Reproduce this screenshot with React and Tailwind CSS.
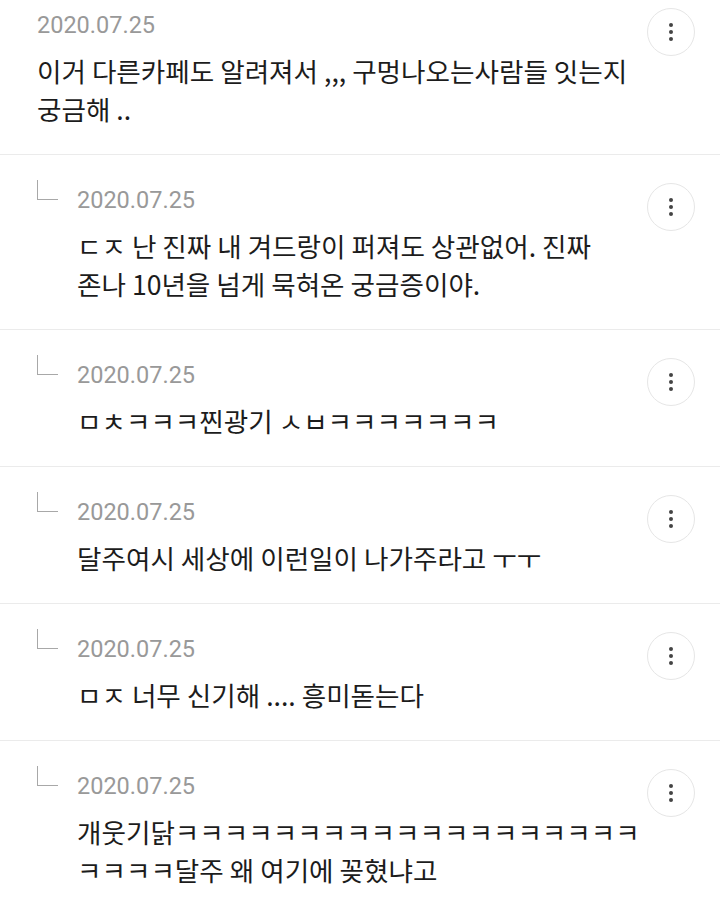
import React from "react";

const comments = [
  { reply: false, first: true, lines: ["이거 다른카페도 알려져서 ,,, 구멍나오는사람들 잇는지", "궁금해 .."] },
  { reply: true, lines: ["ㄷㅈ 난 진짜 내 겨드랑이 퍼져도 상관없어. 진짜", "존나 10년을 넘게 묵혀온 궁금증이야."] },
  { reply: true, lines: ["ㅁㅊㅋㅋㅋ찐광기 ㅅㅂㅋㅋㅋㅋㅋㅋㅋ"] },
  { reply: true, lines: ["달주여시 세상에 이런일이 나가주라고 ㅜㅜ"] },
  { reply: true, lines: ["ㅁㅈ 너무 신기해 .... 흥미돋는다"] },
  { reply: true, lines: ["개웃기닭ㅋㅋㅋㅋㅋㅋㅋㅋㅋㅋㅋㅋㅋㅋㅋㅋㅋㅋㅋ", "ㅋㅋㅋㅋ달주 왜 여기에 꽂혔냐고"] },
];

function Kebab() {
  return (
    <div className="w-[48px] h-[48px] rounded-full border border-[#e6e6e6] flex flex-col items-center justify-center gap-[3px] shrink-0">
      <span className="w-[4px] h-[4px] rounded-full bg-[#444]" />
      <span className="w-[4px] h-[4px] rounded-full bg-[#444]" />
      <span className="w-[4px] h-[4px] rounded-full bg-[#444]" />
    </div>
  );
}

function ReplyMark() {
  return (
    <div className="w-[40px] shrink-0 pt-[25px]">
      <div className="w-[21px] h-[20px] border-l-[1.5px] border-b-[1.5px] border-[#a8a8a8]" />
    </div>
  );
}

export default function App() {
  return (
    <div className="w-[720px] h-[903px] overflow-hidden bg-white" style={{ fontFamily: 'Roboto, "Noto Sans CJK KR", sans-serif' }}>
      {comments.map((c, i) => (
        <div
          key={i}
          className={`flex pl-[37px] pr-[25px] border-b border-[#ebebeb] ${c.first ? "-mt-[20px]" : ""}`}
        >
          {c.reply && <ReplyMark />}
          <div className="flex-1 pt-[28px] pb-[26px]">
            <div className="h-[36px] flex items-center text-[23.5px] text-[#999999] leading-none">2020.07.25</div>
            <div className="mt-[8px] text-[26.6px] leading-[38px] text-[#1c1c1c] whitespace-nowrap" style={{ fontFamily: '"Noto Sans CJK KR", Roboto, sans-serif' }}>
              {c.lines.map((l, j) => (
                <div key={j}>{l}</div>
              ))}
            </div>
          </div>
          <div className="pt-[28px]">
            <Kebab />
          </div>
        </div>
      ))}
    </div>
  );
}
